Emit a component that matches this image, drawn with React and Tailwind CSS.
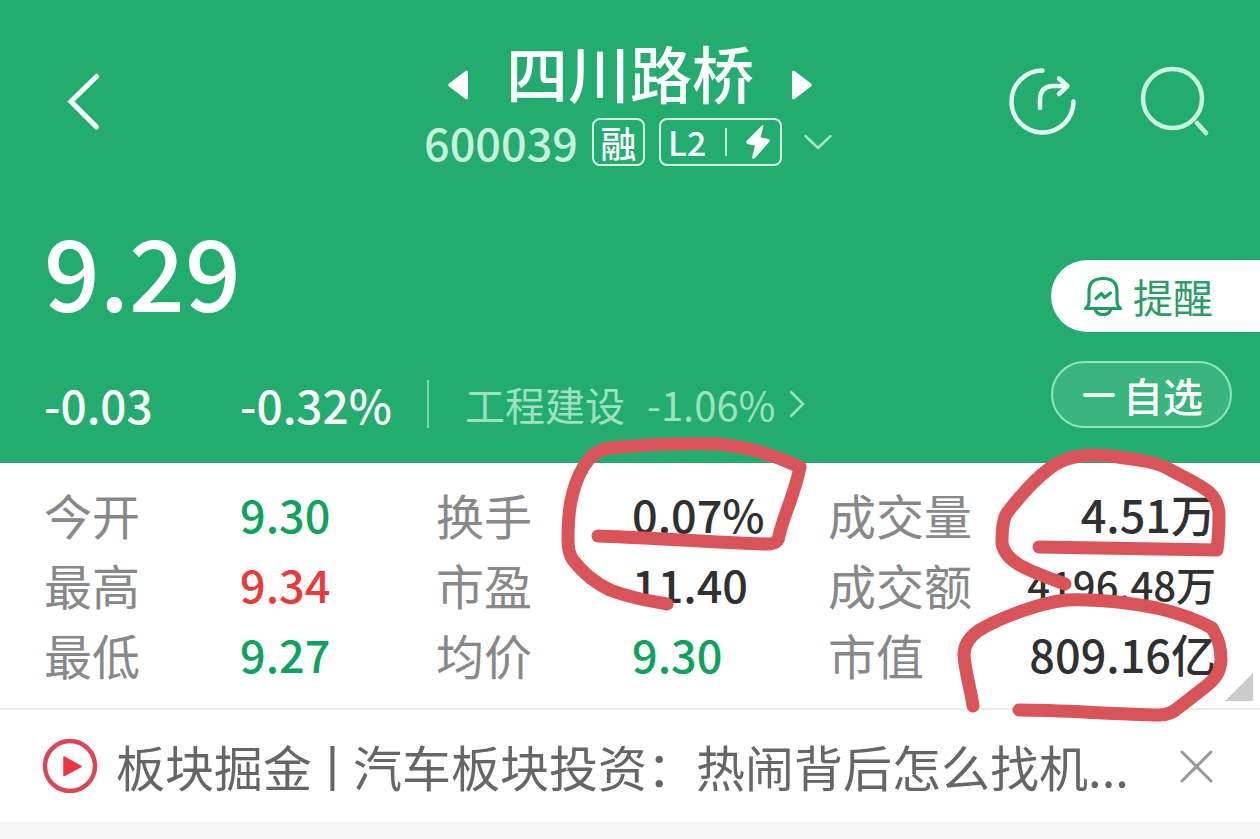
const stats = [
  { label: "今开", value: "9.30", tone: "down" },
  { label: "换手", value: "0.07%", tone: "plain" },
  { label: "成交量", value: "4.51万", tone: "plain", last: true },
  { label: "最高", value: "9.34", tone: "up" },
  { label: "市盈", value: "11.40", tone: "plain" },
  { label: "成交额", value: "4196.48万", tone: "plain", last: true, small: true },
  { label: "最低", value: "9.27", tone: "down" },
  { label: "均价", value: "9.30", tone: "down" },
  { label: "市值", value: "809.16亿", tone: "plain", last: true },
];

const tones = {
  up: "text-[#e93a3a]",
  down: "text-[#0ba35d]",
  plain: "text-[#303030]",
};

function TopBar() {
  return (
    <div className="grid grid-cols-[1fr_auto_1fr] items-start">
      <button type="button" aria-label="返回" className="mt-8 ml-16 w-10">
        <svg className="w-10 h-[60px]" viewBox="0 0 40 60" fill="none" stroke="currentColor" strokeWidth="5" strokeLinecap="round">
          <path d="M32.500 4.500L7 29.500L32.500 55" />
        </svg>
      </button>

      <div className="flex flex-col items-center">
        <div className="flex items-end gap-[38px]">
          <button type="button" aria-label="上一只" className="mb-1">
            <svg className="w-5 h-[30px]" viewBox="0 0 20 30" fill="currentColor">
              <path d="M20 2V28Q20 30 17.500 29L1 16.500Q-.5 15 1 13.500L17.500 1Q20 0 20 2Z" />
            </svg>
          </button>
          <h1 className="text-[62px] leading-16 font-medium">四川路桥</h1>
          <button type="button" aria-label="下一只" className="mb-1">
            <svg className="w-5 h-[30px]" viewBox="0 0 20 30" fill="currentColor">
              <path d="M0 2V28Q0 30 2.500 29L19 16.500Q20.500 15 19 13.500L2.500 1Q0 0 0 2Z" />
            </svg>
          </button>
        </div>

        <div className="mt-[14px] flex items-center gap-[14px] pr-1">
          <span className="text-[45px] leading-12 font-medium text-[#c8f0dc]">600039</span>
          <span className="flex h-12 w-[53px] items-center justify-center rounded-lg border-2 border-[#d9f8e8] text-[36px] leading-10 font-medium">融</span>
          <span className="flex h-12 w-[123px] items-center justify-between rounded-lg border-2 border-[#d9f8e8] pr-[10px] pl-[7px]">
            <span className="text-[34px] leading-10 font-medium">L2</span>
            <span className="h-7 w-[2px] bg-[#c8f0dc]"></span>
            <svg className="w-6 h-[34px]" viewBox="0 0 24 34" fill="currentColor">
              <path d="M16.500 0L0 16.500L1 19L9 20.500L6 33L8 34L24 16L23 14L14.500 12.500L17.500 1Z" />
            </svg>
          </span>
          <button type="button" aria-label="更多" className="ml-2">
            <svg className="w-7 h-4" viewBox="0 0 28 16" fill="none" stroke="#a6e6c6" strokeWidth="2.500" strokeLinecap="round">
              <path d="M1.500 2L14 14L26.500 2" />
            </svg>
          </button>
        </div>
      </div>

      <div className="mt-6 mr-[50px] flex justify-end gap-[60px]">
        <button type="button" aria-label="分享">
          <svg className="size-[72px]" viewBox="0 0 72 72" fill="none" stroke="#e8fff4" strokeWidth="4.500" strokeLinecap="round" strokeLinejoin="round">
            <path d="M36.500 6.500A31 31 0 1 0 67.500 37.500" />
            <path d="M34 44V36Q34 22 48 22H61M53 14.500L61.500 22L53 30" />
          </svg>
        </button>
        <button type="button" aria-label="搜索">
          <svg className="size-[72px]" viewBox="0 0 72 72" fill="none" stroke="#c6f3dd" strokeWidth="4.500" strokeLinecap="round">
            <circle cx="34.500" cy="34.500" r="29.500" />
            <path d="M59 59L68 69" />
          </svg>
        </button>
      </div>
    </div>
  );
}

function Quote() {
  return (
    <div className="mt-[51px] flex justify-between">
      <div className="pl-11">
        <div className="text-[98px] leading-[104px] font-medium">9.29</div>
        <div className="mt-[59px] flex items-center text-[46px] leading-12">
          <span className="w-[196px] font-medium">-0.03</span>
          <span className="w-[187px] font-medium whitespace-nowrap">-0.32%</span>
          <span className="h-12 w-[2px] bg-[#7fd4a9]"></span>
          <a href="#sector" className="ml-9 flex items-center gap-[14px] text-[40px] text-[#9fe0c0]">
            <span className="mr-2">工程建设</span>
            <span>-1.06%</span>
            <svg className="w-4 h-7" viewBox="0 0 16 28" fill="none" stroke="currentColor" strokeWidth="2.500">
              <path d="M1.500 1.500L14 14L1.500 26.500" />
            </svg>
          </a>
        </div>
      </div>

      <div className="flex w-[209px] flex-col gap-[29px] pt-[43px]">
        <button type="button" className="flex h-[72px] items-center gap-[10px] rounded-l-full bg-white pl-8 text-[40px] text-[#2a9d68]">
          <svg className="size-10" viewBox="0 0 40 40" fill="none" stroke="#17a05f" strokeWidth="3.200" strokeLinecap="round" strokeLinejoin="round">
            <path d="M2.500 32.500Q6 30 6 25V15.500Q6 2.500 20 2.500T34 15.500V25Q34 30 37.500 32.500Z" />
            <path d="M12.500 34Q14 38.500 20 38.500T27.500 34" />
            <path d="M13 22.500L18.500 17.500L21.500 21.500L27.500 17" />
          </svg>
          提醒
        </button>
        <button type="button" className="mr-7 flex h-[67px] items-center gap-2 rounded-full border-2 border-[#90e5bb] bg-[#39b47d] pl-[30px] text-[40px] font-medium">
          <span className="h-1 w-8 rounded-full bg-[#e8fff4]"></span>
          自选
        </button>
      </div>
    </div>
  );
}

function Stats() {
  return (
    <section className="relative border-b-2 border-[#ebebeb] bg-white pt-4 pr-10 pb-[19px] pl-11">
      <dl className="grid grid-cols-3 leading-[70px]">
        {stats.map((item) => (
          <div key={item.label} className="grid grid-cols-2">
            <dt className="text-[48px] whitespace-nowrap text-[#888888]">{item.label}</dt>
            <dd
              className={`font-medium whitespace-nowrap ${tones[item.tone]} ${item.last ? "flex justify-end pr-1" : ""} ${item.small ? "text-[40px]" : "text-[45px]"}`}
            >
              {item.value}
            </dd>
          </div>
        ))}
      </dl>
      <svg className="absolute right-[7px] bottom-[7px] size-7" viewBox="0 0 28 28" fill="#cbcbcb">
        <path d="M28 0V28H0Z" />
      </svg>
    </section>
  );
}

function NewsBar() {
  return (
    <section className="flex h-28 items-center bg-white pr-11 pl-[42px]">
      <svg className="size-14 shrink-0" viewBox="0 0 56 56" fill="none">
        <circle cx="28" cy="28" r="25" stroke="#dc4552" strokeWidth="4.500" />
        <path d="M22 19V37.500L39 28.500Z" fill="#f0343f" stroke="#f0343f" strokeWidth="1.500" strokeLinejoin="round" />
      </svg>
      <a href="#news" className="ml-[18px] flex-1 truncate text-[49px] leading-[70px] text-[#666666]">
        板块掘金<span className="-mx-1">丨</span>汽车板块投资：热闹背后怎么找机...
      </a>
      <button type="button" aria-label="关闭" className="shrink-0">
        <svg className="size-10" viewBox="0 0 40 40" fill="none" stroke="#999999" strokeWidth="3" strokeLinecap="round">
          <path d="M6 6L35 35M35 6L6 35" />
        </svg>
      </button>
    </section>
  );
}

// Hand-drawn marker strokes around the highlighted figures
function Marks() {
  return (
    <svg
      className="pointer-events-none absolute top-0 left-0 w-full"
      viewBox="0 0 1260 839"
      fill="none"
      stroke="#d95459"
      strokeWidth="13"
      strokeLinecap="round"
      strokeLinejoin="round"
    >
      <path d="M598 536C640 537 720 543 767 544Q778 544 779 536C782 520 796 490 800 467C770 453 745 446 717 444C680 443 640 445 610 448Q594 450 584 466C570 489 568 515 568 540Q568 553 573 560C583 573 595 583 610 590C628 597 645 600 667 604" />
      <path d="M1039 547L1217 550Q1219 535 1219 513Q1218 500 1209 492C1199 484 1185 478 1167 468C1155 462 1140 460 1125 458Q1108 455 1094 455C1076 455 1062 459 1050 468C1034 480 1020 496 1007 513Q1002 520 1002 543C1005 563 1030 571 1065 584" />
      <path d="M973 706C971 690 965 672 964 655Q964 641 978 631C995 620 1037 603 1067 600C1094 599 1125 602 1157 608C1178 613 1198 620 1212 628C1219 640 1221 648 1221 660C1220 674 1214 680 1205 687L1178 708Q1170 715 1160 715C1110 714 1060 710 1019 710" />
    </svg>
  );
}

export default function App() {
  return (
    <main className="relative min-h-screen bg-[#f7f7f7] font-['Noto_Sans_CJK_SC',sans-serif]">
      <header className="bg-[#22ac6e] pt-10 pb-[35px] text-white">
        <TopBar />
        <Quote />
      </header>
      <Stats />
      <NewsBar />
      <Marks />
    </main>
  );
}
